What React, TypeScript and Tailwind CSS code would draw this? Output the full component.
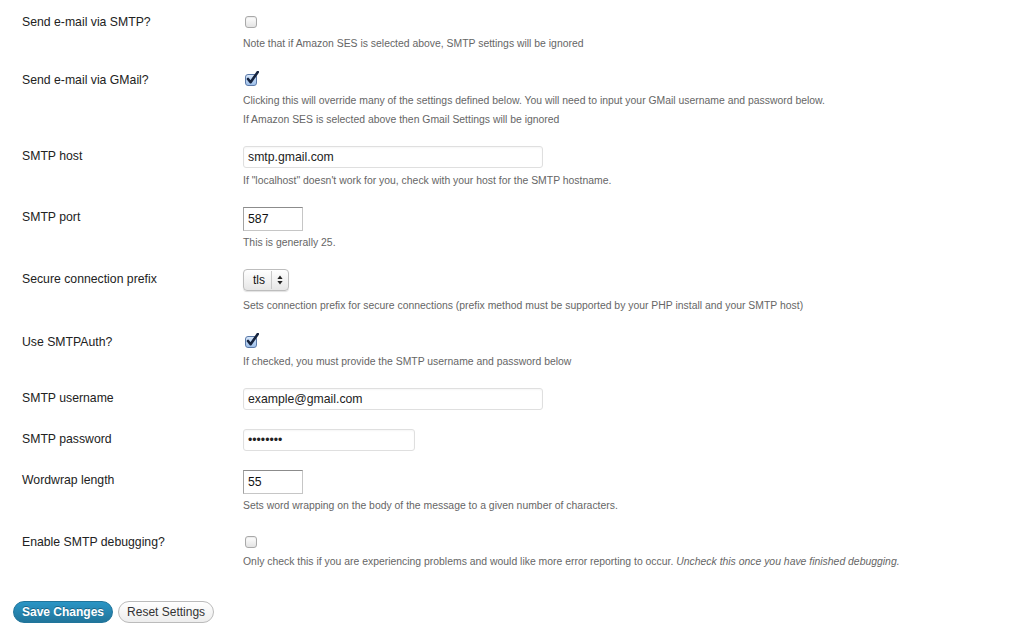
const font = { fontFamily: '"Liberation Sans", Arial, sans-serif' };

function Checkbox({ checked }: { checked?: boolean }) {
  return (
    <div className="flex h-[20px] items-center pl-[2px]">
      <span
        className={
          checked
            ? "relative block h-[12px] w-[12px] rounded-[3px] border border-[#5a79a8] bg-gradient-to-b from-[#d6e6fa] to-[#9fc0ea]"
            : "relative block h-[12px] w-[12px] rounded-[3px] border border-[#a9a9a9] bg-gradient-to-b from-white to-[#e3e3e3] shadow-[inset_0_1px_1px_rgba(0,0,0,0.08)]"
        }
      >
        {checked && (
          <svg
            className="absolute left-[0px] top-[-4px]"
            width="13"
            height="14"
            viewBox="0 0 13 14"
          >
            <path
              d="M2 8 L4.6 11.2 L11.8 1"
              fill="none"
              stroke="#16243f"
              strokeWidth="2.6"
              strokeLinecap="round"
              strokeLinejoin="round"
            />
          </svg>
        )}
      </span>
    </div>
  );
}

function TextInput({ value, width }: { value: string; width: string }) {
  return (
    <div
      className={`${width} flex h-[22px] items-center rounded-[3px] border border-[#dfdfdf] bg-white pl-[4px] text-[12.25px] text-[#222] shadow-[inset_0_1px_2px_rgba(0,0,0,0.04)]`}
    >
      {value}
    </div>
  );
}

function SmallInput({ value }: { value: string }) {
  return (
    <div className="flex h-[24px] w-[60px] items-center border border-[#c6c6c6] border-l-[#a3a3a3] border-t-[#8c8c8c] bg-white pl-[4px] text-[12.25px] text-[#111]">
      {value}
    </div>
  );
}

function Select() {
  return (
    <div className="flex h-[22px] w-[46px] items-stretch rounded-[4px] border border-[#bdbdbd] bg-gradient-to-b from-white to-[#e6e6e6] text-[12px] text-[#111] shadow-[0_1px_1px_rgba(0,0,0,0.12)]">
      <div className="flex w-[27px] items-center pl-[9px]">tls</div>
      <div className="my-[1px] w-px bg-[#c9c9c9]" />
      <div className="flex flex-1 items-center justify-center">
        <svg width="6" height="10" viewBox="0 0 6 10">
          <path d="M3 0.5 L5.6 4 L0.4 4 Z" fill="#222" />
          <path d="M3 9.5 L5.6 6 L0.4 6 Z" fill="#222" />
        </svg>
      </div>
    </div>
  );
}

function Desc({ children, mt = "mt-[3px]" }: { children: React.ReactNode; mt?: string }) {
  return <p className={`${mt} h-[16px] text-[10.42px] leading-[18px] text-[#666]`}>{children}</p>;
}

function Row({ label, children }: { label: string; children: React.ReactNode }) {
  return (
    <div className="flex items-start pb-[9px] pt-[10px]">
      <div className="w-[243px] pl-[22px] text-[12.25px] leading-[20px] text-[#222]">{label}</div>
      <div className="flex flex-col items-start">{children}</div>
    </div>
  );
}

export default function App() {
  return (
    <div className="min-h-[635px] w-[1009px] bg-white pt-[2px]" style={font}>
      <Row label="Send e-mail via SMTP?">
        <Checkbox />
        <Desc>Note that if Amazon SES is selected above, SMTP settings will be ignored</Desc>
      </Row>
      <Row label="Send e-mail via GMail?">
        <Checkbox checked />
        <Desc mt="mt-[2px]">
          Clicking this will override many of the settings defined below. You will need to input your GMail
          username and password below.
        </Desc>
        <Desc mt="mt-[3px]">If Amazon SES is selected above then Gmail Settings will be ignored</Desc>
      </Row>
      <Row label="SMTP host">
        <TextInput value="smtp.gmail.com" width="w-[300px]" />
        <Desc mt="mt-[4px]">If "localhost" doesn't work for you, check with your host for the SMTP hostname.</Desc>
      </Row>
      <Row label="SMTP port">
        <SmallInput value="587" />
        <Desc>This is generally 25.</Desc>
      </Row>
      <Row label="Secure connection prefix">
        <Select />
        <Desc mt="mt-[6px]">
          Sets connection prefix for secure connections (prefix method must be supported by your PHP install
          and your SMTP host)
        </Desc>
      </Row>
      <Row label="Use SMTPAuth?">
        <Checkbox checked />
        <Desc mt="mt-[1px]">If checked, you must provide the SMTP username and password below</Desc>
      </Row>
      <Row label="SMTP username">
        <TextInput value="example@gmail.com" width="w-[300px]" />
      </Row>
      <Row label="SMTP password">
        <TextInput value="••••••••" width="w-[172px]" />
      </Row>
      <Row label="Wordwrap length">
        <SmallInput value="55" />
        <Desc>Sets word wrapping on the body of the message to a given number of characters.</Desc>
      </Row>
      <Row label="Enable SMTP debugging?">
        <Checkbox />
        <Desc mt="mt-[1px]">
          Only check this if you are experiencing problems and would like more error reporting to occur.{" "}
          <em>Uncheck this once you have finished debugging.</em>
        </Desc>
      </Row>
      <div className="mt-[23px] flex gap-[5px] pl-[13px]">
        <button className="h-[22px] rounded-full border border-[#21759b] bg-gradient-to-b from-[#2a95c5] to-[#21759b] px-[8px] text-[12px] font-bold text-white [text-shadow:0_-1px_0_rgba(0,0,0,0.3)]">
          Save Changes
        </button>
        <button className="h-[22px] rounded-full border border-[#bbb] bg-gradient-to-b from-white to-[#ededed] px-[8px] text-[12px] text-[#333]">
          Reset Settings
        </button>
      </div>
    </div>
  );
}
